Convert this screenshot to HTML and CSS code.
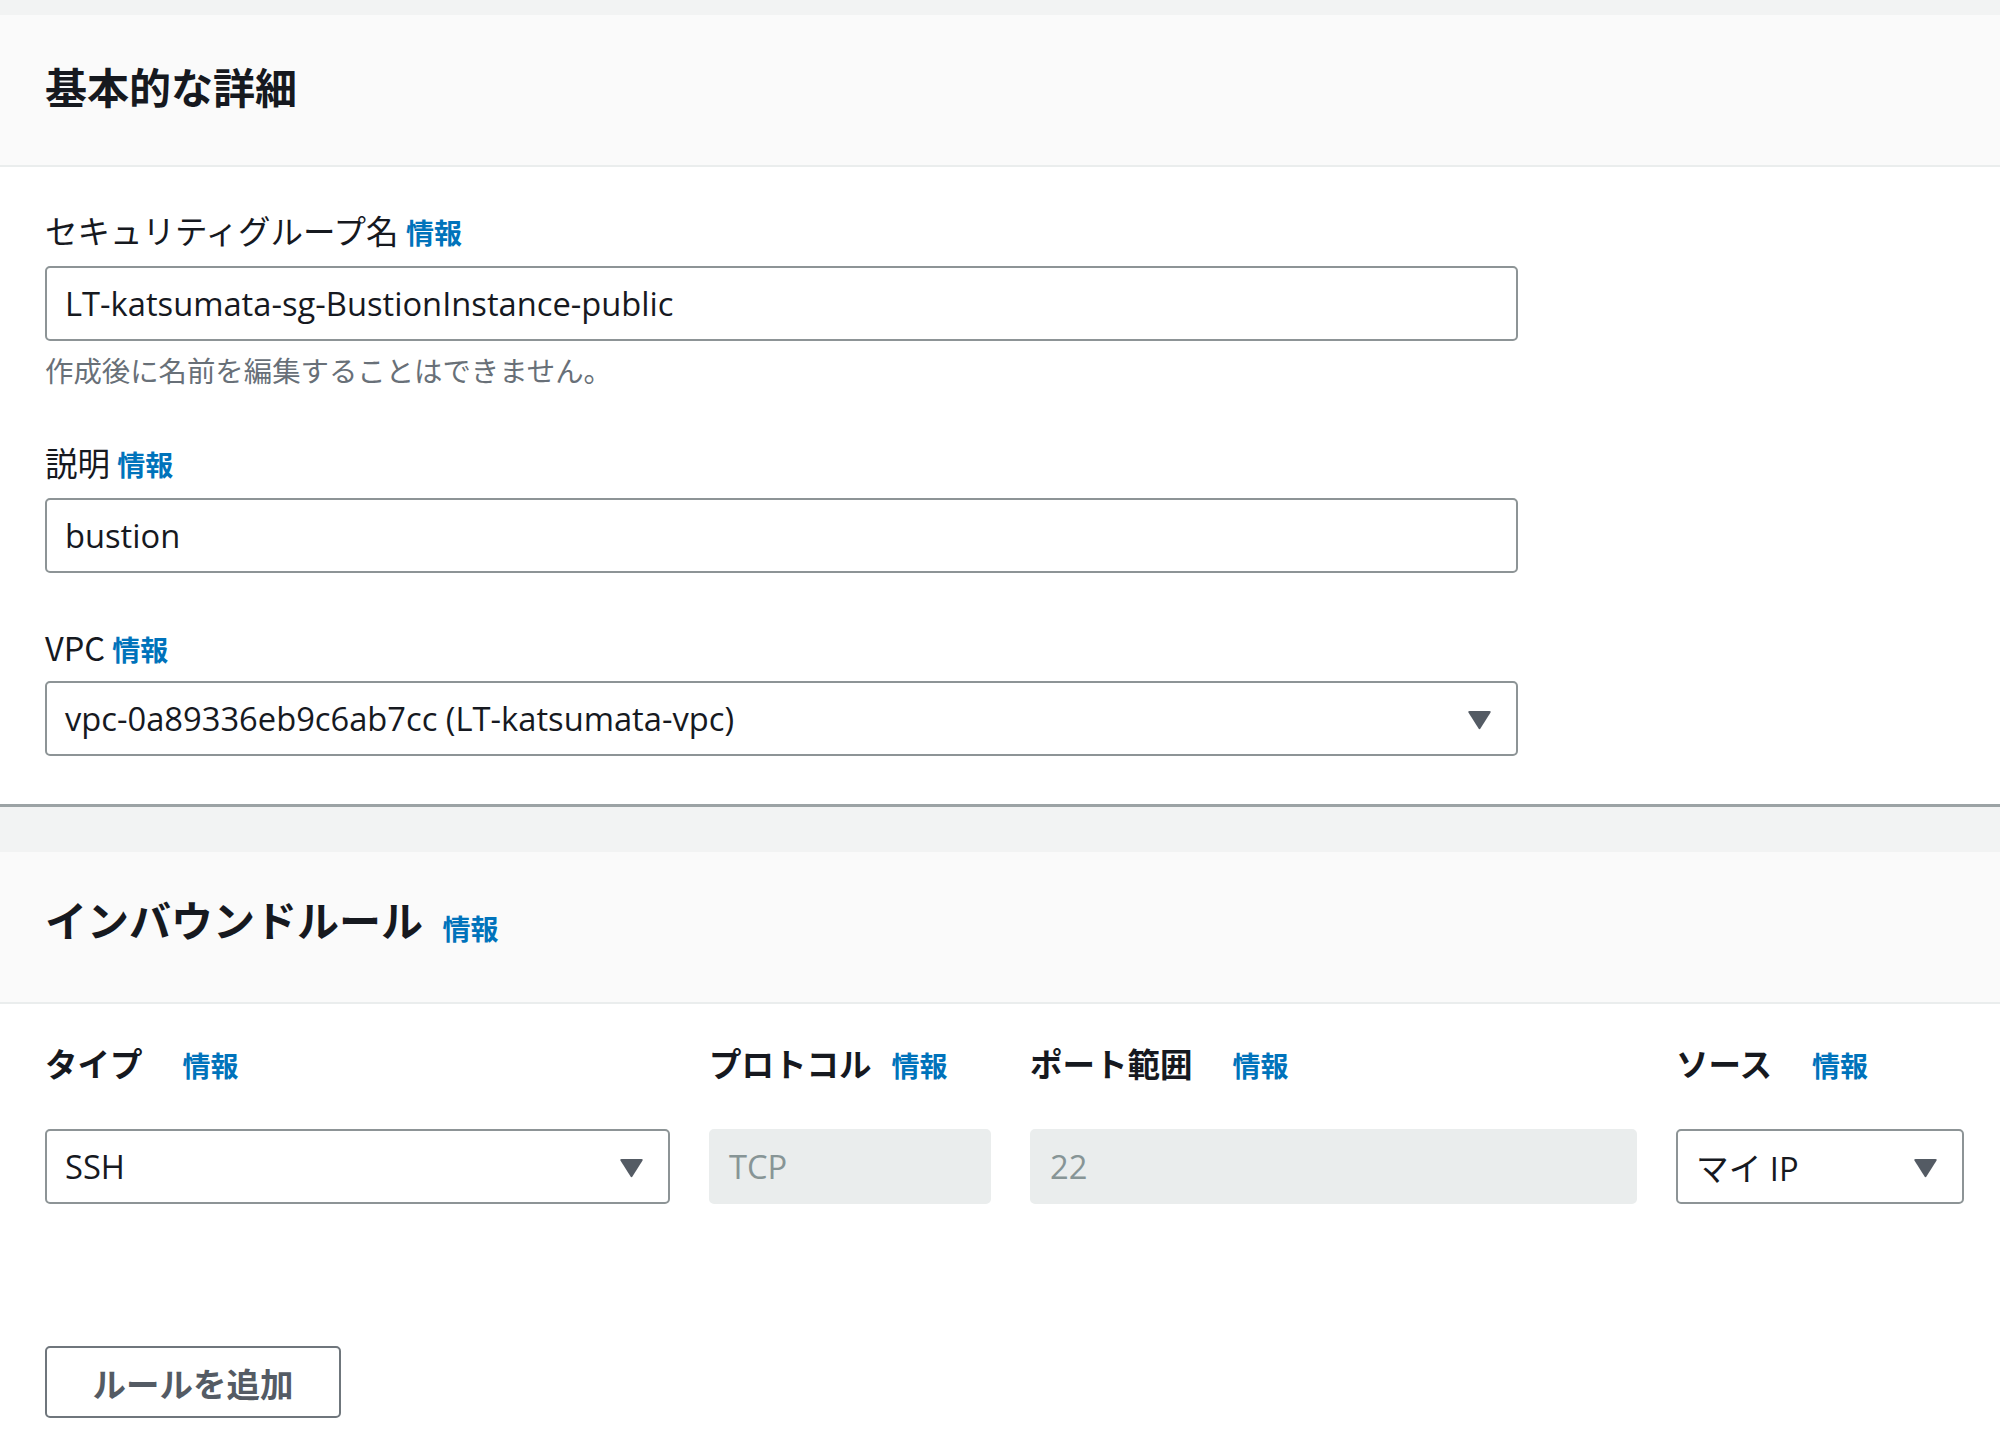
FILE: index.html
```html
<!DOCTYPE html>
<html lang="ja">
<head>
<meta charset="utf-8">
<title>セキュリティグループの作成</title>
<link rel="stylesheet" href="styles.css">
</head>
<body>
<div class="topband"></div>

<section class="panel">
  <header class="panel-header">
    <h2 class="panel-title">基本的な詳細</h2>
  </header>
  <div class="panel-body">
    <div class="field">
      <div class="label">セキュリティグループ名 <a class="info">情報</a></div>
      <div class="input">LT-katsumata-sg-BustionInstance-public</div>
      <div class="hint">作成後に名前を編集することはできません。</div>
    </div>
    <div class="field">
      <div class="label">説明 <a class="info">情報</a></div>
      <div class="input">bustion</div>
    </div>
    <div class="field">
      <div class="label">VPC <a class="info">情報</a></div>
      <div class="input select">
        <span>vpc-0a89336eb9c6ab7cc (LT-katsumata-vpc)</span>
        <svg class="caret" width="25" height="20" viewBox="0 0 25 20"><path d="M2.5 1 H22.5 Q24.5 1 23.4 2.8 L13.6 18.3 Q12.5 20 11.4 18.3 L1.6 2.8 Q0.5 1 2.5 1 Z" fill="#545b64"/></svg>
      </div>
    </div>
  </div>
</section>

<div class="gap"></div>

<section class="panel panel-last">
  <header class="panel-header">
    <h2 class="panel-title">インバウンドルール <a class="info info-title">情報</a></h2>
  </header>
  <div class="panel-body rules">
    <div class="rule-grid">
      <div class="col-label">タイプ<a class="info">情報</a></div>
      <div class="col-label tight">プロトコル<a class="info">情報</a></div>
      <div class="col-label">ポート範囲<a class="info">情報</a></div>
      <div class="col-label">ソース<a class="info">情報</a></div>

      <div class="input select">
        <span>SSH</span>
        <svg class="caret" width="25" height="20" viewBox="0 0 25 20"><path d="M2.5 1 H22.5 Q24.5 1 23.4 2.8 L13.6 18.3 Q12.5 20 11.4 18.3 L1.6 2.8 Q0.5 1 2.5 1 Z" fill="#545b64"/></svg>
      </div>
      <div class="input disabled">TCP</div>
      <div class="input disabled">22</div>
      <div class="input select">
        <span>マイ IP</span>
        <svg class="caret" width="25" height="20" viewBox="0 0 25 20"><path d="M2.5 1 H22.5 Q24.5 1 23.4 2.8 L13.6 18.3 Q12.5 20 11.4 18.3 L1.6 2.8 Q0.5 1 2.5 1 Z" fill="#545b64"/></svg>
      </div>
    </div>
    <button class="btn">ルールを追加</button>
  </div>
</section>
</body>
</html>
```

FILE: styles.css
```css
* { box-sizing: border-box; }

html, body {
  margin: 0;
  padding: 0;
  background: #ffffff;
}

body {
  font-family: "Open Sans", "Noto Sans CJK JP", sans-serif;
  color: #16191f;
  width: 2000px;
}

.topband {
  height: 15px;
  background: #f2f3f3;
}

.panel {
  background: #ffffff;
  border-bottom: 3px solid #9ca3a5;
}

.panel-last {
  border-bottom: none;
}

.panel-header {
  background: #fafafa;
  height: 152px;
  padding: 0 45px;
  display: flex;
  align-items: center;
  border-bottom: 2px solid #eaeded;
}

.panel-title {
  margin: 0 0 8px 0;
  font-family: "Noto Sans CJK JP", sans-serif;
  font-size: 42px;
  font-weight: 700;
  line-height: 56px;
  color: #16191f;
}

.panel-body {
  padding: 43px 36px 48px 45px;
  display: flex;
  flex-direction: column;
  gap: 54px;
}

.field {
  width: 1473px;
  display: flex;
  flex-direction: column;
}

.label {
  font-family: "Noto Sans CJK JP", sans-serif;
  font-size: 32.5px;
  line-height: 40px;
  margin-bottom: 14px;
  color: #16191f;
}

.field + .field + .field .label {
  margin-bottom: 12px;
}

.info {
  font-family: "Noto Sans CJK JP", sans-serif;
  font-size: 28px;
  font-weight: 700;
  color: #0073bb;
  text-decoration: none;
}

.info-title {
  margin-left: 10px;
  vertical-align: -3px;
}

.input {
  height: 75px;
  border: 2px solid #8d9496;
  border-radius: 5px;
  padding: 0 20px 0 18px;
  display: flex;
  align-items: center;
  font-size: 32.7px;
  color: #16191f;
  background: #ffffff;
  white-space: nowrap;
}

.select {
  justify-content: space-between;
  padding-right: 24px;
}

.caret {
  flex: none;
  display: block;
  margin-top: 2px;
}

.hint {
  font-family: "Noto Sans CJK JP", sans-serif;
  font-size: 28.4px;
  line-height: 36px;
  margin-top: 11px;
  color: #687078;
}

.gap {
  height: 45px;
  background: #f2f3f3;
}

.rules {
  padding-top: 37px;
  gap: 142px;
}

.rule-grid {
  display: grid;
  grid-template-columns: 625px 282px 607px 288px;
  column-gap: 39px;
  row-gap: 44px;
}

.col-label {
  font-family: "Noto Sans CJK JP", sans-serif;
  font-size: 32.5px;
  font-weight: 700;
  line-height: 40px;
  display: flex;
  align-items: center;
  gap: 40px;
}

.col-label .info {
  margin-top: 4px;
}

.col-label.tight {
  gap: 20px;
}

.disabled {
  background: #eaeded;
  border-color: #eaeded;
  color: #879596;
}

.btn {
  align-self: flex-start;
  width: 296px;
  height: 72px;
  background: #ffffff;
  border: 2px solid #6f767c;
  border-radius: 5px;
  font-family: "Noto Sans CJK JP", sans-serif;
  font-size: 33.5px;
  font-weight: 700;
  color: #545b64;
  padding: 0;
  margin-bottom: 31px;
}
```
